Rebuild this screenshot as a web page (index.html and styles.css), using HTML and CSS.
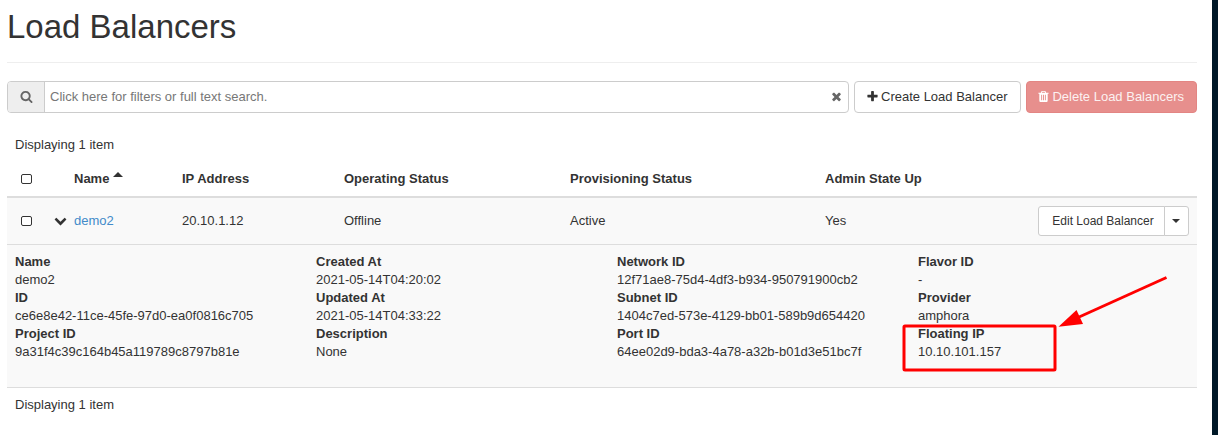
FILE: index.html
```html
<!DOCTYPE html>
<html lang="en">
<head>
<meta charset="utf-8">
<title>Load Balancers</title>
<link rel="stylesheet" href="styles.css">
</head>
<body>
<div class="page">
<main class="content">
  <h1 class="title">Load Balancers</h1>
  <div class="toolbar">
    <div class="search">
      <span class="search-addon"><svg class="icon" viewBox="0 0 1792 1792"><path d="M1216 832q0-185-131.500-316.500t-316.500-131.500-316.500 131.500-131.500 316.500 131.500 316.500 316.500 131.500 316.500-131.500 131.500-316.500zm512 832q0 52-38 90t-90 38q-54 0-90-38l-343-342q-179 124-399 124-143 0-273.500-55.500t-225-150-150-225-55.500-273.500 55.500-273.500 150-225 225-150 273.500-55.500 273.500 55.500 225 150 150 225 55.500 273.500q0 220-124 399l343 343q37 37 37 90z"/></svg></span>
      <div class="search-field"><span>Click here for filters or full text search.</span>
        <svg class="icon" viewBox="0 0 1792 1792"><path d="M1490 1322q0 40-28 68l-136 136q-28 28-68 28t-68-28l-294-294-294 294q-28 28-68 28t-68-28l-136-136q-28-28-28-68t28-68l294-294-294-294q-28-28-28-68t28-68l136-136q28-28 68-28t68 28l294 294 294-294q28-28 68-28t68 28l136 136q28 28 28 68t-28 68l-294 294 294 294q28 28 28 68z"/></svg>
      </div>
    </div>
    <button class="btn btn-create"><svg class="icon" viewBox="0 0 1792 1792"><path d="M1600 736v192q0 40-28 68t-68 28h-416v416q0 40-28 68t-68 28h-192q-40 0-68-28t-28-68v-416h-416q-40 0-68-28t-28-68v-192q0-40 28-68t68-28h416v-416q0-40 28-68t68-28h192q40 0 68 28t28 68v416h416q40 0 68 28t28 68z"/></svg><span>Create Load Balancer</span></button>
    <button class="btn btn-delete"><svg class="icon" viewBox="0 0 1792 1792"><path d="M704 1376v-704q0-14-9-23t-23-9h-64q-14 0-23 9t-9 23v704q0 14 9 23t23 9h64q14 0 23-9t9-23zm256 0v-704q0-14-9-23t-23-9h-64q-14 0-23 9t-9 23v704q0 14 9 23t23 9h64q14 0 23-9t9-23zm256 0v-704q0-14-9-23t-23-9h-64q-14 0-23 9t-9 23v704q0 14 9 23t23 9h64q14 0 23-9t9-23zm-544-992h448l-48-117q-7-9-17-11h-317q-10 2-17 11zm928 32v64q0 14-9 23t-23 9h-96v948q0 83-47 143.500t-113 60.500h-832q-66 0-113-58.500t-47-141.500v-952h-96q-14 0-23-9t-9-23v-64q0-14 9-23t23-9h309l70-167q15-37 54-63t79-26h320q40 0 79 26t54 63l70 167h309q14 0 23 9t9 23z"/></svg><span>Delete Load Balancers</span></button>
  </div>
  <div class="count">Displaying 1 item</div>
  <div class="row head">
    <span class="check"></span><span></span>
    <span class="sort">Name <i class="caret-up"></i></span><span>IP Address</span><span>Operating Status</span><span>Provisioning Status</span><span>Admin State Up</span>
  </div>
  <div class="row item">
    <span class="check"></span>
    <svg class="icon chevron" viewBox="0 0 1792 1792"><path d="M1683 808l-742 741q-19 19-45 19t-45-19l-742-741q-19-19-19-45.500t19-45.500l166-165q19-19 45-19t45 19l531 531 531-531q19-19 45-19t45 19l166 165q19 19 19 45.500t-19 45.500z"/></svg>
    <a class="link">demo2</a><span>20.10.1.12</span><span>Offline</span><span>Active</span><span>Yes</span>
    <div class="split"><button class="split-main">Edit Load Balancer</button><button class="split-toggle"><i class="caret-down"></i></button></div>
  </div>
  <div class="details">
    <dl><dt>Name</dt><dd>demo2</dd><dt>ID</dt><dd>ce6e8e42-11ce-45fe-97d0-ea0f0816c705</dd><dt>Project ID</dt><dd>9a31f4c39c164b45a119789c8797b81e</dd></dl>
    <dl><dt>Created At</dt><dd>2021-05-14T04:20:02</dd><dt>Updated At</dt><dd>2021-05-14T04:33:22</dd><dt>Description</dt><dd>None</dd></dl>
    <dl><dt>Network ID</dt><dd>12f71ae8-75d4-4df3-b934-950791900cb2</dd><dt>Subnet ID</dt><dd>1404c7ed-573e-4129-bb01-589b9d654420</dd><dt>Port ID</dt><dd>64ee02d9-bda3-4a78-a32b-b01d3e51bc7f</dd></dl>
    <dl><dt>Flavor ID</dt><dd>-</dd><dt>Provider</dt><dd>amphora</dd><dt>Floating IP</dt><dd>10.10.101.157</dd></dl>
    <svg class="callout" viewBox="0 0 280 110"><rect x="7" y="54" width="151" height="44" rx="1"/><path class="shaft" d="M269.500 5.500 181 45.500"/><path class="tip" d="M161.500 54.800 179.500 38 186 52z"/></svg>
  </div>
  <div class="count foot">Displaying 1 item</div>
</main>
<div class="edge"></div>
</div>
</body>
</html>
```

FILE: styles.css
```css
* { box-sizing: border-box; }
body { margin: 0; background: #fff; color: #333; font: 13px/18px "Liberation Sans", Arial, sans-serif; }
.page { display: flex; justify-content: space-between; height: 435px; overflow: hidden; }
.content { width: 1190px; margin-left: 7px; }
.edge { width: 6px; background: #001828; }
.title { margin: 0 0 18px; height: 63px; padding-top: 8px; border-bottom: 1px solid #eee; font-size: 33px; font-weight: 400; line-height: 37px; }
button { font: inherit; color: inherit; margin: 0; background: #fff; border: 1px solid #ccc; white-space: nowrap; }
.icon { width: 13px; height: 13px; fill: currentColor; flex: none; }
.toolbar { display: flex; gap: 5px; height: 32px; }
.toolbar .icon { margin-bottom: 2px; }
.search { display: flex; width: 842px; border: 1px solid #ccc; border-radius: 4px; overflow: hidden; }
.search-addon { display: flex; align-items: center; justify-content: center; width: 37px; background: #eee; border-right: 1px solid #ccc; color: #666; }
.search-field { flex: 1; display: flex; align-items: center; justify-content: space-between; padding: 0 5px; color: #777; }
.search-field .icon { color: #666; }
.btn { display: flex; align-items: center; justify-content: center; gap: 2px; padding: 0 1.5px 0 0; border-radius: 4px; }
.btn-create { width: 167px; }
.btn-delete { width: 171px; color: #fff; background: #e78f8d; border-color: #e38583; }
.btn-delete span { opacity: .88; }
.count { padding: 23px 8px 0; height: 47px; }
.row { display: grid; grid-template-columns: 39px 20px 108px 162px 226px 255px 1fr auto; align-items: center; padding-right: 8px; }
.row > :nth-child(n+3) { margin-left: 8px; }
.head { height: 38px; padding-top: 1px; border-bottom: 2px solid #ddd; font-weight: 700; }
.item { height: 47px; background: #f9f9f9; border-bottom: 1px solid #ddd; }
.check { width: 11px; height: 10px; margin-left: 14px; border: 1px solid #333; border-radius: 2px; background: #fff; }
.head .check { margin-top: 1px; }
.chevron { margin: 0 0 2px 8px; }
.link { color: #428bca; }
.sort { display: flex; gap: 4px; }
.caret-up { margin-top: 2px; width: 0; height: 0; align-self: flex-start; border: 5px solid transparent; border-top: 0; border-bottom: 5px solid #333; }
.caret-down { width: 0; height: 0; border: 4px solid transparent; border-bottom: 0; border-top-color: #333; }
.split { display: flex; height: 30px; font-size: 12px; }
.split-main { width: 127px; padding: 0 0 0 3px; border-radius: 3px 0 0 3px; }
.split-toggle { display: flex; align-items: center; justify-content: center; width: 25px; margin-left: -1px; padding: 0 1px 0 0; border-radius: 0 3px 3px 0; }
.details { position: relative; display: grid; grid-template-columns: repeat(4, 301px); height: 143px; padding: 8px 0 0 8px; overflow: hidden; background: #f9f9f9; border-bottom: 1px solid #ddd; }
dl, dd { margin: 0; }
dt { font-weight: 700; }
.foot { padding-top: 8px; }
.callout { position: absolute; left: 890px; top: 27px; width: 280px; height: 110px; fill: none; stroke: #f00; stroke-width: 3; }
.callout .tip { fill: #f00; stroke: none; }
```
